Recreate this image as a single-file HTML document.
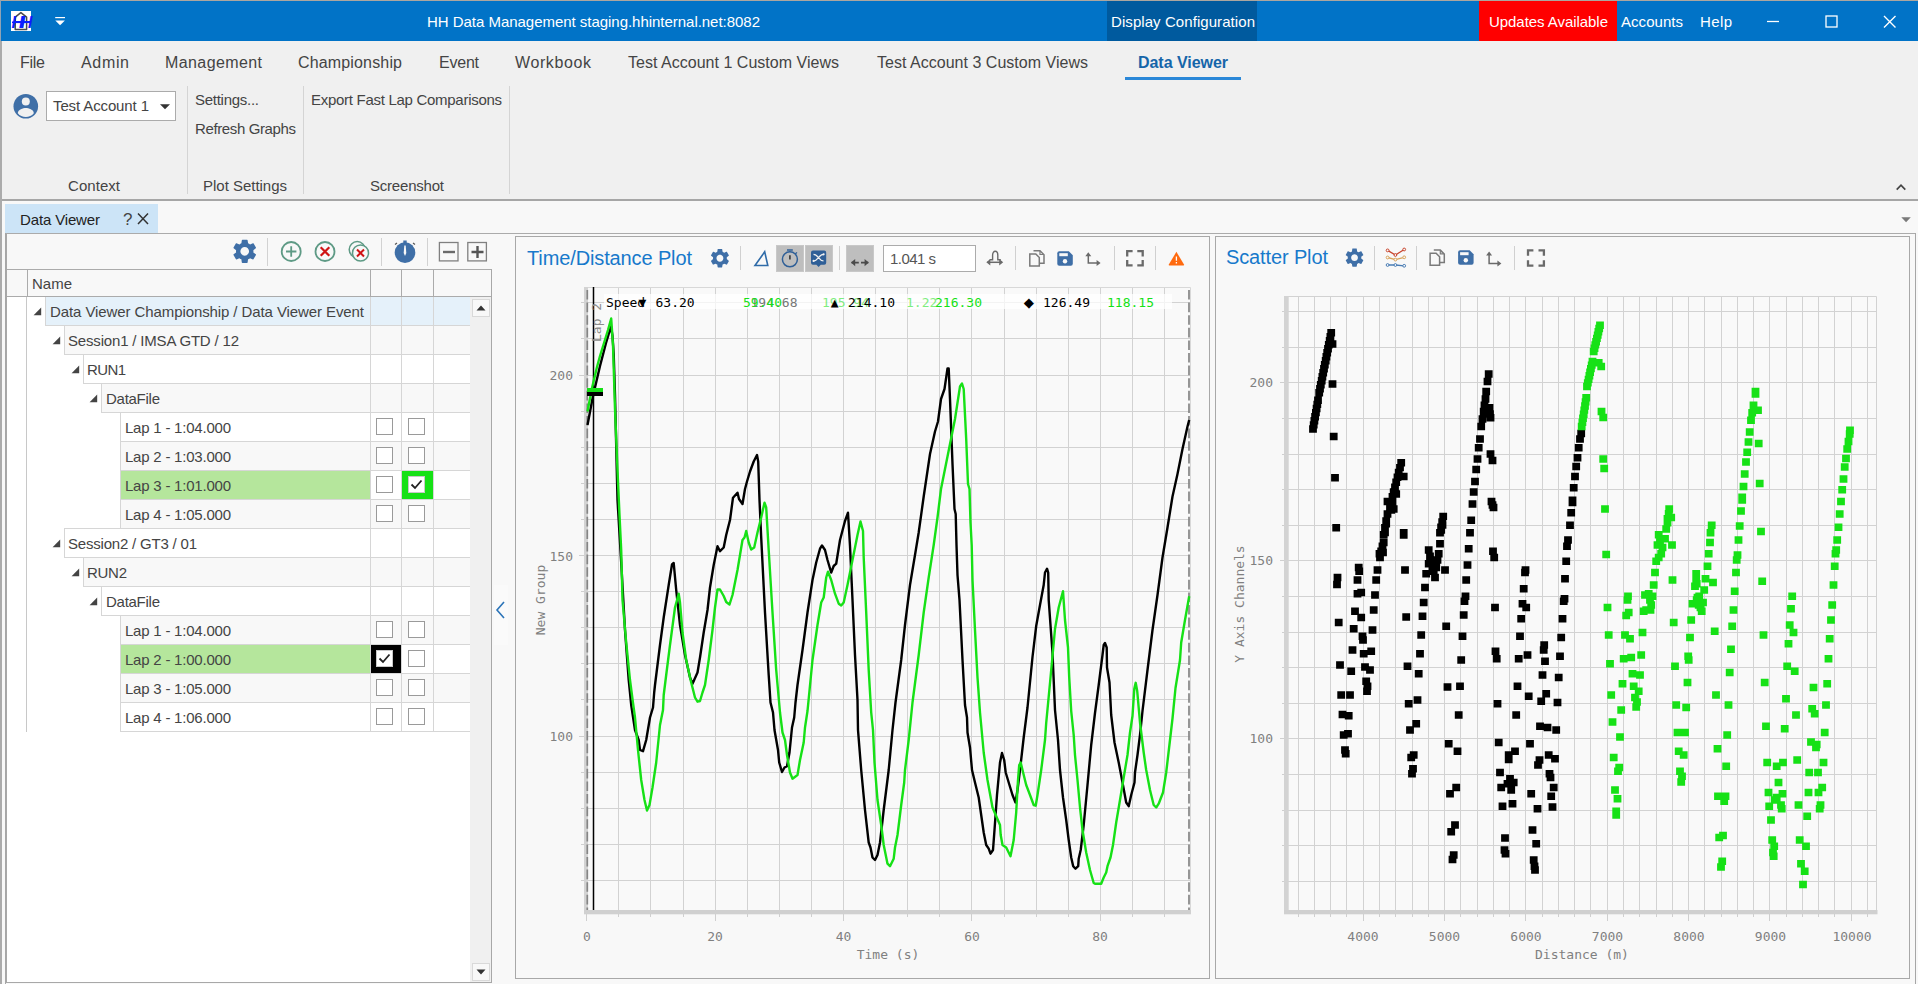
<!DOCTYPE html>
<html><head><meta charset="utf-8"><title>HH Data Management</title>
<style>
*{box-sizing:border-box}
html,body{margin:0;padding:0}
body{width:1918px;height:984px;overflow:hidden;background:#F0F0F0;position:relative;font-family:"Liberation Sans",sans-serif;}
.a{position:absolute}
.t{position:absolute;white-space:nowrap;line-height:20px;height:20px}
.mono{font-family:"DejaVu Sans Mono","Liberation Mono",monospace}
svg{position:absolute;left:0;top:0;overflow:visible}
.vsep{position:absolute;width:1px;background:#D4D4D4}
.cb{position:absolute;width:17px;height:17px;border:1px solid #9A9A9A;background:#fff}
.cell{position:absolute;border-left:1px solid #D6D6D6;border-bottom:1px solid #D6D6D6;height:29px}
</style></head><body>
<div class="a" style="left:0;top:0;width:1918px;height:41px;background:#0173C7"></div>
<div class="a" style="left:1107px;top:1px;width:150px;height:40px;background:#005A9E"></div>
<div class="a" style="left:1479px;top:1px;width:138px;height:40px;background:#FF0000"></div>
<div class="a" style="left:0;top:0;width:1918px;height:1px;background:#ACA69F"></div>
<div class="a" style="left:0;top:0;width:1px;height:41px;background:#8FA3B5"></div>
<div class="a" style="left:0;top:199px;width:1918px;height:2px;background:#A6A6A6"></div>
<div class="a" style="left:0;top:201px;width:1918px;height:783px;background:#F8F8F8"></div>
<div class="a" style="left:5px;top:204px;width:153px;height:30px;background:#CCE4F7"></div>
<div class="a" style="left:5px;top:233px;width:1911px;height:1px;background:#ABABAB"></div>
<div class="a" style="left:1125px;top:77px;width:116px;height:3px;background:#2B88D8"></div>
<div class="vsep" style="left:187px;top:86px;height:108px"></div>
<div class="vsep" style="left:303px;top:86px;height:108px"></div>
<div class="vsep" style="left:509px;top:86px;height:108px"></div>
<div class="a" style="left:46px;top:91px;width:130px;height:30px;background:#fff;border:1px solid #ABABAB"></div>
<div class="a" style="left:0;top:41px;width:2px;height:943px;background:#ABABAB"></div>
<div class="a" style="left:5px;top:233px;width:1px;height:751px;background:#A6A6A6"></div>
<div class="a" style="left:1915px;top:233px;width:1px;height:751px;background:#A6A6A6"></div>
<div class="a" style="left:6px;top:234px;width:1px;height:749px;background:#A8A8A8"></div>
<div class="a" style="left:6px;top:269px;width:486px;height:714px;background:#fff;border:1px solid #A8A8A8"></div>
<div class="a" style="left:7px;top:269px;width:484px;height:28px;background:#F8F8F8;border-top:1px solid #ABABAB;border-bottom:1px solid #ABABAB"></div>
<div class="a" style="left:27px;top:270px;width:1px;height:26px;background:#ABABAB"></div>
<div class="a" style="left:370px;top:270px;width:1px;height:26px;background:#ABABAB"></div>
<div class="a" style="left:401px;top:270px;width:1px;height:26px;background:#ABABAB"></div>
<div class="a" style="left:433px;top:270px;width:1px;height:26px;background:#ABABAB"></div>
<div class="a" style="left:26px;top:297px;width:1px;height:435px;background:#C8C8C8"></div>
<div class="cell" style="left:45px;top:297px;width:325px;background:#E5F1FA"></div>
<div class="cell" style="left:370px;top:297px;width:31px;background:#E5F1FA"></div>
<div class="cell" style="left:401px;top:297px;width:32px;background:#E5F1FA"></div>
<div class="cell" style="left:433px;top:297px;width:37px;background:#E5F1FA"></div>
<svg width="1" height="1"><path d="M41.2 315.2l-7.6 0l7.6 -7.6z" fill="#444"/></svg>
<div class="cell" style="left:64px;top:326px;width:306px;background:#F8F8F8"></div>
<div class="cell" style="left:370px;top:326px;width:31px;background:#F8F8F8"></div>
<div class="cell" style="left:401px;top:326px;width:32px;background:#F8F8F8"></div>
<div class="cell" style="left:433px;top:326px;width:37px;background:#F8F8F8"></div>
<svg width="1" height="1"><path d="M60.2 344.2l-7.6 0l7.6 -7.6z" fill="#444"/></svg>
<div class="cell" style="left:83px;top:355px;width:287px;background:#fff"></div>
<div class="cell" style="left:370px;top:355px;width:31px;background:#fff"></div>
<div class="cell" style="left:401px;top:355px;width:32px;background:#fff"></div>
<div class="cell" style="left:433px;top:355px;width:37px;background:#fff"></div>
<svg width="1" height="1"><path d="M79.2 373.2l-7.6 0l7.6 -7.6z" fill="#444"/></svg>
<div class="cell" style="left:101px;top:384px;width:269px;background:#F8F8F8"></div>
<div class="cell" style="left:370px;top:384px;width:31px;background:#F8F8F8"></div>
<div class="cell" style="left:401px;top:384px;width:32px;background:#F8F8F8"></div>
<div class="cell" style="left:433px;top:384px;width:37px;background:#F8F8F8"></div>
<svg width="1" height="1"><path d="M97.2 402.2l-7.6 0l7.6 -7.6z" fill="#444"/></svg>
<div class="cell" style="left:120px;top:413px;width:250px;background:#fff"></div>
<div class="cell" style="left:370px;top:413px;width:31px;background:#fff"></div>
<div class="cell" style="left:401px;top:413px;width:32px;background:#fff"></div>
<div class="cell" style="left:433px;top:413px;width:37px;background:#fff"></div>
<div class="cb" style="left:376px;top:418px"></div>
<div class="cb" style="left:408px;top:418px"></div>
<div class="cell" style="left:120px;top:442px;width:250px;background:#F8F8F8"></div>
<div class="cell" style="left:370px;top:442px;width:31px;background:#F8F8F8"></div>
<div class="cell" style="left:401px;top:442px;width:32px;background:#F8F8F8"></div>
<div class="cell" style="left:433px;top:442px;width:37px;background:#F8F8F8"></div>
<div class="cb" style="left:376px;top:447px"></div>
<div class="cb" style="left:408px;top:447px"></div>
<div class="cell" style="left:120px;top:471px;width:250px;background:#B5E69C"></div>
<div class="cell" style="left:370px;top:471px;width:31px;background:#fff"></div>
<div class="cell" style="left:401px;top:471px;width:32px;background:#fff"></div>
<div class="cell" style="left:433px;top:471px;width:37px;background:#fff"></div>
<div class="cb" style="left:376px;top:476px"></div>
<div class="a" style="left:402px;top:471px;width:31px;height:28px;background:#16E116"></div>
<div class="cb" style="left:408px;top:476px;border-color:#C8C8C8"></div>
<svg width="1" height="1"><path d="M411.5 484.5l3.5 3.5l6.5 -7.5" stroke="#222" stroke-width="1.8" fill="none"/></svg>
<div class="cell" style="left:120px;top:500px;width:250px;background:#F8F8F8"></div>
<div class="cell" style="left:370px;top:500px;width:31px;background:#F8F8F8"></div>
<div class="cell" style="left:401px;top:500px;width:32px;background:#F8F8F8"></div>
<div class="cell" style="left:433px;top:500px;width:37px;background:#F8F8F8"></div>
<div class="cb" style="left:376px;top:505px"></div>
<div class="cb" style="left:408px;top:505px"></div>
<div class="cell" style="left:64px;top:529px;width:306px;background:#fff"></div>
<div class="a" style="left:64px;top:528px;width:56px;height:1px;background:#D6D6D6"></div>
<div class="cell" style="left:370px;top:529px;width:31px;background:#fff"></div>
<div class="cell" style="left:401px;top:529px;width:32px;background:#fff"></div>
<div class="cell" style="left:433px;top:529px;width:37px;background:#fff"></div>
<svg width="1" height="1"><path d="M60.2 547.2l-7.6 0l7.6 -7.6z" fill="#444"/></svg>
<div class="cell" style="left:83px;top:558px;width:287px;background:#F8F8F8"></div>
<div class="cell" style="left:370px;top:558px;width:31px;background:#F8F8F8"></div>
<div class="cell" style="left:401px;top:558px;width:32px;background:#F8F8F8"></div>
<div class="cell" style="left:433px;top:558px;width:37px;background:#F8F8F8"></div>
<svg width="1" height="1"><path d="M79.2 576.2l-7.6 0l7.6 -7.6z" fill="#444"/></svg>
<div class="cell" style="left:101px;top:587px;width:269px;background:#fff"></div>
<div class="cell" style="left:370px;top:587px;width:31px;background:#fff"></div>
<div class="cell" style="left:401px;top:587px;width:32px;background:#fff"></div>
<div class="cell" style="left:433px;top:587px;width:37px;background:#fff"></div>
<svg width="1" height="1"><path d="M97.2 605.2l-7.6 0l7.6 -7.6z" fill="#444"/></svg>
<div class="cell" style="left:120px;top:616px;width:250px;background:#F8F8F8"></div>
<div class="cell" style="left:370px;top:616px;width:31px;background:#F8F8F8"></div>
<div class="cell" style="left:401px;top:616px;width:32px;background:#F8F8F8"></div>
<div class="cell" style="left:433px;top:616px;width:37px;background:#F8F8F8"></div>
<div class="cb" style="left:376px;top:621px"></div>
<div class="cb" style="left:408px;top:621px"></div>
<div class="cell" style="left:120px;top:645px;width:250px;background:#B5E69C"></div>
<div class="cell" style="left:370px;top:645px;width:31px;background:#fff"></div>
<div class="cell" style="left:401px;top:645px;width:32px;background:#fff"></div>
<div class="cell" style="left:433px;top:645px;width:37px;background:#fff"></div>
<div class="a" style="left:371px;top:645px;width:30px;height:28px;background:#000"></div>
<div class="cb" style="left:376px;top:650px;border-color:#C8C8C8"></div>
<svg width="1" height="1"><path d="M379.5 658.5l3.5 3.5l6.5 -7.5" stroke="#222" stroke-width="1.8" fill="none"/></svg>
<div class="cb" style="left:408px;top:650px"></div>
<div class="cell" style="left:120px;top:674px;width:250px;background:#F8F8F8"></div>
<div class="cell" style="left:370px;top:674px;width:31px;background:#F8F8F8"></div>
<div class="cell" style="left:401px;top:674px;width:32px;background:#F8F8F8"></div>
<div class="cell" style="left:433px;top:674px;width:37px;background:#F8F8F8"></div>
<div class="cb" style="left:376px;top:679px"></div>
<div class="cb" style="left:408px;top:679px"></div>
<div class="cell" style="left:120px;top:703px;width:250px;background:#fff"></div>
<div class="cell" style="left:370px;top:703px;width:31px;background:#fff"></div>
<div class="cell" style="left:401px;top:703px;width:32px;background:#fff"></div>
<div class="cell" style="left:433px;top:703px;width:37px;background:#fff"></div>
<div class="cb" style="left:376px;top:708px"></div>
<div class="cb" style="left:408px;top:708px"></div>
<div class="a" style="left:470px;top:297px;width:21px;height:685px;background:#F0F0F0"></div>
<div class="a" style="left:472px;top:299px;width:18px;height:18px;background:#F8F8F8;border:1px solid #D9D9D9"></div>
<div class="a" style="left:472px;top:963px;width:18px;height:18px;background:#F8F8F8;border:1px solid #D9D9D9"></div>
<svg width="1" height="1"><path d="M476.5 310.5h9l-4.5 -5z M476.5 969.5h9l-4.5 5z" fill="#333"/></svg>
<div class="a" style="left:494px;top:585px;width:14px;height:60px;background:#FAFAFA"></div>
<svg width="1" height="1"><path d="M504 602l-7 8l7 8" stroke="#2B74B8" stroke-width="1.6" fill="none"/></svg>
<div class="a" style="left:515px;top:236px;width:695px;height:743px;background:#F8F8F8;border:1px solid #A8A8A8"></div>
<div class="a" style="left:1215px;top:236px;width:695px;height:743px;background:#F8F8F8;border:1px solid #A8A8A8"></div>
<div class="a" style="left:776px;top:245px;width:28px;height:27px;background:#BEBEBE;border:1px solid #C8C8C8"></div>
<div class="a" style="left:805px;top:245px;width:28px;height:27px;background:#BEBEBE;border:1px solid #C8C8C8"></div>
<div class="a" style="left:846px;top:245px;width:28px;height:27px;background:#BEBEBE;border:1px solid #C8C8C8"></div>
<div class="a" style="left:883px;top:245px;width:93px;height:27px;background:#fff;border:1px solid #ABABAB"></div>
<div class="vsep" style="left:740px;top:246px;height:24px;background:#D0D0D0"></div>
<div class="vsep" style="left:839px;top:246px;height:24px;background:#D0D0D0"></div>
<div class="vsep" style="left:1015px;top:246px;height:24px;background:#D0D0D0"></div>
<div class="vsep" style="left:1114px;top:246px;height:24px;background:#D0D0D0"></div>
<div class="vsep" style="left:1155px;top:246px;height:24px;background:#D0D0D0"></div>
<div class="vsep" style="left:1374px;top:246px;height:24px;background:#D0D0D0"></div>
<div class="vsep" style="left:1416px;top:246px;height:24px;background:#D0D0D0"></div>
<div class="vsep" style="left:1514px;top:246px;height:24px;background:#D0D0D0"></div>
<svg width="1918" height="984" viewBox="0 0 1918 984">
<rect x="588" y="287" width="602" height="623" fill="#F9F9F9"/>
<path d="M618.5 287V910M650.5 287V910M683.5 287V910M715.5 287V910M747.5 287V910M779.5 287V910M811.5 287V910M843.5 287V910M875.5 287V910M907.5 287V910M939.5 287V910M971.5 287V910M1004.5 287V910M1036.5 287V910M1068.5 287V910M1100.5 287V910M1132.5 287V910M1164.5 287V910M588 880.5H1190M588 844.5H1190M588 808.5H1190M588 772.5H1190M588 736.5H1190M588 699.5H1190M588 663.5H1190M588 627.5H1190M588 591.5H1190M588 555.5H1190M588 519.5H1190M588 483.5H1190M588 447.5H1190M588 411.5H1190M588 375.5H1190M588 338.5H1190M588 302.5H1190" stroke="#D2D2D2" stroke-width="1" fill="none"/>
<path d="M588 287.5H1190.5V910" stroke="#D8D8D8" stroke-width="1" fill="none"/>
<path d="M586.5 914V921M618.5 914V917M650.5 914V917M683.5 914V917M715.5 914V921M747.5 914V917M779.5 914V917M811.5 914V917M843.5 914V921M875.5 914V917M907.5 914V917M939.5 914V917M971.5 914V921M1004.5 914V917M1036.5 914V917M1068.5 914V917M1100.5 914V921M1132.5 914V917M1164.5 914V917M581 880.5H585M581 844.5H585M581 808.5H585M581 772.5H585M579 736.5H585M581 699.5H585M581 663.5H585M581 627.5H585M581 591.5H585M579 555.5H585M581 519.5H585M581 483.5H585M581 447.5H585M581 411.5H585M579 375.5H585M581 338.5H585M581 302.5H585" stroke="#CFCFCF" stroke-width="1" fill="none"/>
<rect x="584" y="287" width="4" height="627" fill="#D3D3D3"/>
<rect x="584" y="910" width="607" height="4.3" fill="#D0D0D0"/>
<path d="M587.3 290V910M1189 290V910" stroke="#858585" stroke-width="1.7" stroke-dasharray="9.6 3" fill="none"/>
<path d="M593.5 287V910" stroke="#000" stroke-width="1.5"/>
<text transform="translate(601,342) rotate(-90)" class="mono" fill="#8C8C8C" font-size="13">Lap 2</text>
<rect x="604" y="294" width="568" height="15" fill="#fff" opacity="0.72"/>
<path d="M587.5 425 L593 396 L600 366 L606 343 L611 326.5 L612.5 336 L613.7 354 L615 395 L617.5 500 L621.2 562.5 L625 630 L628.7 680 L631.2 705 L635 730 L638.7 740 L640 750 L643 751.2 L646.2 740 L650 717.5 L653 707.5 L654.2 692.5 L655 685 L660 645 L663.7 617.5 L668.7 585 L672 564.5 L673.7 563 L676.2 590 L680 625 L685 655 L690 677.5 L692.5 683.7 L697.5 672.5 L700 657.5 L703.7 632.5 L707.5 610 L710 587.5 L713.7 565 L717.5 546.2 L720 551.2 L723.7 547.5 L726.2 535 L730 520 L733 497.7 L737.5 492.7 L739 499 L742.5 504 L745 489 L747 481.5 L750 471.5 L753.7 461.5 L757 455 L758.2 461.5 L759.5 500 L761.2 537.5 L765 612.5 L768.7 675 L770.5 702.5 L773 712.5 L774.5 730 L778 750 L779.2 762.5 L782 772 L784.5 767.5 L787 766.2 L789.5 752.5 L792 727.5 L794.2 717.5 L795.5 702.5 L797.5 685 L802.5 650 L807.5 612.5 L812.5 580 L816.2 562.5 L820 548.7 L822 545.5 L825 550 L827.5 560 L831.2 572.5 L833.7 566 L836.2 563.7 L840 540 L845 521 L848 512.7 L850 546 L852.5 600 L855 655 L857.5 700 L858 730 L861.2 770 L865 810 L868.7 842.5 L870.5 847.5 L872.5 857.5 L875 860 L877.5 855 L880 842.5 L883.7 810 L888.7 770 L892.5 730 L895.5 702.5 L901.2 660 L905 625 L910 585 L915 555 L918.7 532.5 L923.7 496.5 L930 454 L935 431.5 L938 421.5 L941 399 L944.5 389 L947.5 368.5 L948.7 368.5 L950 399 L952.5 464 L954.5 509 L955.7 514 L956.5 545 L957.5 575 L959.5 600 L962.5 660 L965 705 L967 717.5 L967.5 732.5 L970 747.5 L972 770 L975 782.5 L978.7 797.5 L981.2 815 L983.7 832.5 L986.2 845 L988.7 848.7 L990.5 853.7 L993 850 L994.5 830 L997 795 L1000 762.5 L1002 753 L1004.2 760 L1005.7 772.5 L1008.7 782.5 L1012.5 795 L1015.5 802.5 L1017.5 790 L1020 770 L1023.7 737.5 L1027.5 707.5 L1032.5 657 L1036.2 626 L1040 605 L1043.7 585 L1045 572.5 L1047 568.7 L1048.2 572.5 L1048.7 600 L1052.5 653 L1055 710 L1058 740 L1060 770 L1063 797.5 L1066.2 820 L1068.7 840 L1071.2 857.5 L1073.2 866.2 L1075.5 868.7 L1078.2 866.2 L1078.7 858.7 L1080.7 850 L1083.7 825 L1087.5 785 L1091.2 745 L1095 713 L1098.7 685 L1102.5 655 L1103.7 645 L1105 643 L1106.7 647.5 L1107 667.5 L1109.5 682.5 L1111.2 715 L1114.5 742.5 L1118.7 762.5 L1122.5 782.5 L1126.2 802.5 L1128.7 806.2 L1131.2 795 L1134.5 782.5 L1135 772.5 L1137.5 755 L1140 735 L1142.5 711 L1147.5 670 L1152.5 630 L1157.5 595 L1162.5 557.5 L1167.5 527.5 L1172.5 496.5 L1177.5 474 L1182.5 449 L1187.5 426.5 L1189.2 420" stroke="#000" stroke-width="2.4" fill="none" stroke-linejoin="round" stroke-linecap="butt"/>
<path d="M587.5 411.5 L592 388 L597 367 L600 356 L604 343 L608 330 L611.2 318.5 L613 345 L615 409 L618 481.5 L619.5 515 L621.2 550 L622.5 600 L626.2 642.5 L630 680 L633 703 L635 717.5 L638 750 L641.2 780 L644.5 800 L647 810.5 L649.5 805 L652.5 787.5 L656.2 762.5 L660 725 L663 710 L663.7 695 L666.2 675 L670 645 L675 607.5 L678.7 593.7 L680 602.5 L682.5 632.5 L686.2 660 L691.2 682.5 L695 697.5 L697.5 701.7 L700 701 L702.5 692.5 L705 685 L708.7 660 L712.5 630 L715 607.5 L717.5 589.5 L720 589.5 L723.7 596 L726.2 602 L729.5 604.5 L732.5 595 L737.5 570 L742.5 540 L744.5 537.5 L746.2 531 L748.7 542.5 L751.2 549.5 L754.2 547.5 L757.5 532.5 L761.2 517.5 L764.5 502.7 L766.2 507.5 L768.7 550 L772.5 612.5 L776.2 670 L780 712.5 L782.5 732.5 L785 740 L787 755 L790 772.5 L792.5 778.7 L797.5 775 L800 760 L803.7 742.5 L805 727.5 L807.5 711 L812.5 660 L817.5 625 L821.2 602.5 L823.7 597.5 L826.2 577.5 L828 571.7 L831.2 580 L835 593.7 L838.7 603.7 L841.2 605.5 L843.7 602.5 L847.5 585 L852.5 560 L857.5 535 L860.5 521.5 L863 531 L863.7 557.5 L866.2 612.5 L868.7 670 L871.2 712.5 L873 730 L874.5 762.5 L877.5 800 L881.2 825 L883.7 845 L887.5 863.7 L890 866.2 L893.7 858.7 L895 847.5 L897.5 835 L901.2 805 L904.2 782.5 L905 770 L908.7 740 L912.5 702.5 L918.7 655 L923.7 612.5 L928.7 577.5 L933.7 545 L937.5 517.5 L941 489 L947.5 456.5 L955 419 L960 386.5 L962 383.5 L963.7 389 L966.2 439 L968 484 L969.5 489 L970.5 522.5 L971.7 545 L972.5 580 L975 630 L977.5 677.5 L980 712.5 L983.7 752.5 L987.5 780 L992.5 807.5 L1000 825 L1000.7 835 L1002.5 845 L1006.2 847.5 L1010.5 856.2 L1013.7 840 L1016.2 812.5 L1018 780 L1019.2 765 L1020.7 762.5 L1022.5 770 L1026.2 785 L1030 795 L1033.7 805 L1035.7 805.7 L1037.5 795 L1041.2 770 L1045 740 L1046.2 723 L1050 683 L1055 629 L1058.7 607.5 L1063 591.2 L1065 620 L1068 647.5 L1069.2 677 L1071.2 711 L1073.7 735 L1075 755 L1077.5 780 L1080 807.5 L1082.5 830 L1086.2 852.5 L1090 870 L1093.7 883 L1095 883.7 L1101.2 883.7 L1103.7 877.5 L1106.2 872.5 L1107.5 866.2 L1110.5 857.5 L1113 845 L1116.2 822.5 L1120 800 L1123.7 777.5 L1127.5 755 L1130 732.5 L1132.5 716 L1134.3 688.7 L1135.7 682.8 L1137.2 691 L1140 722.5 L1143.7 752.5 L1146.2 770 L1150 790 L1153.7 805 L1156.2 807.5 L1158.7 803.7 L1163 792.5 L1166.2 772.5 L1170 740 L1172.5 718.5 L1175.5 688 L1180 660 L1181.2 642.5 L1185 620 L1189.2 596.2" stroke="#16E116" stroke-width="2.4" fill="none" stroke-linejoin="round"/>
<rect x="587" y="388" width="16" height="4" fill="#16E116"/>
<rect x="587" y="392" width="16" height="4" fill="#000"/>
<text x="606" y="307" class="mono" font-size="13" fill="#000">Speed</text>
<text x="638.5" y="307" class="mono" font-size="13" fill="#000">&#9660;</text>
<text x="655.5" y="307" class="mono" font-size="13" fill="#000">63.20</text>
<text x="750.5" y="307" class="mono" font-size="13" fill="#777">194.68</text>
<text x="743" y="307" class="mono" font-size="13" fill="#16E116">59.40</text>
<text x="822" y="307" class="mono" font-size="13" fill="#16E116" opacity="0.55">195.94</text>
<text x="830.7" y="307" class="mono" font-size="13" fill="#000">&#9650;</text>
<text x="848" y="307" class="mono" font-size="13" fill="#000">214.10</text>
<text x="906" y="307" class="mono" font-size="13" fill="#16E116" opacity="0.55">1.22</text>
<text x="935" y="307" class="mono" font-size="13" fill="#16E116">216.30</text>
<text x="1028.8" y="308" text-anchor="middle" class="mono" font-size="17" fill="#000">&#9670;</text>
<text x="1043" y="307" class="mono" font-size="13" fill="#000">126.49</text>
<text x="1107" y="307" class="mono" font-size="13" fill="#16E116">118.15</text>
<text x="573" y="379.5" text-anchor="end" class="mono" font-size="13" fill="#808080">200</text>
<text x="573" y="560.5" text-anchor="end" class="mono" font-size="13" fill="#808080">150</text>
<text x="573" y="740.5" text-anchor="end" class="mono" font-size="13" fill="#808080">100</text>
<text x="587" y="941" text-anchor="middle" class="mono" font-size="13" fill="#808080">0</text>
<text x="715" y="941" text-anchor="middle" class="mono" font-size="13" fill="#808080">20</text>
<text x="843.5" y="941" text-anchor="middle" class="mono" font-size="13" fill="#808080">40</text>
<text x="972" y="941" text-anchor="middle" class="mono" font-size="13" fill="#808080">60</text>
<text x="1100" y="941" text-anchor="middle" class="mono" font-size="13" fill="#808080">80</text>
<text x="888" y="959" text-anchor="middle" class="mono" font-size="13" fill="#808080">Time (s)</text>
<text transform="translate(545,600) rotate(-90)" text-anchor="middle" class="mono" font-size="13" fill="#808080">New Group</text>
<rect x="1288" y="296" width="589" height="614" fill="#F9F9F9"/>
<path d="M1298.5 296V910M1314.5 296V910M1330.5 296V910M1346.5 296V910M1363.5 296V910M1379.5 296V910M1395.5 296V910M1412.5 296V910M1428.5 296V910M1444.5 296V910M1460.5 296V910M1477.5 296V910M1493.5 296V910M1509.5 296V910M1525.5 296V910M1542.5 296V910M1558.5 296V910M1574.5 296V910M1590.5 296V910M1607.5 296V910M1623.5 296V910M1639.5 296V910M1656.5 296V910M1672.5 296V910M1688.5 296V910M1704.5 296V910M1721.5 296V910M1737.5 296V910M1753.5 296V910M1769.5 296V910M1786.5 296V910M1802.5 296V910M1818.5 296V910M1834.5 296V910M1851.5 296V910M1867.5 296V910M1288 881.5H1877M1288 845.5H1877M1288 810.5H1877M1288 774.5H1877M1288 738.5H1877M1288 703.5H1877M1288 667.5H1877M1288 632.5H1877M1288 596.5H1877M1288 560.5H1877M1288 525.5H1877M1288 489.5H1877M1288 454.5H1877M1288 418.5H1877M1288 382.5H1877M1288 347.5H1877M1288 311.5H1877" stroke="#D2D2D2" stroke-width="1" fill="none"/>
<path d="M1288 296.5H1876.5V910" stroke="#D2D2D2" stroke-width="1" fill="none"/>
<path d="M1298.5 914V917M1314.5 914V917M1330.5 914V917M1346.5 914V917M1363.5 914V921M1379.5 914V917M1395.5 914V917M1412.5 914V917M1428.5 914V917M1444.5 914V921M1460.5 914V917M1477.5 914V917M1493.5 914V917M1509.5 914V917M1525.5 914V921M1542.5 914V917M1558.5 914V917M1574.5 914V917M1590.5 914V917M1607.5 914V921M1623.5 914V917M1639.5 914V917M1656.5 914V917M1672.5 914V917M1688.5 914V921M1704.5 914V917M1721.5 914V917M1737.5 914V917M1753.5 914V917M1769.5 914V921M1786.5 914V917M1802.5 914V917M1818.5 914V917M1834.5 914V917M1851.5 914V921M1867.5 914V917M1282 881.5H1285M1282 845.5H1285M1282 810.5H1285M1282 774.5H1285M1280 738.5H1285M1282 703.5H1285M1282 667.5H1285M1282 632.5H1285M1282 596.5H1285M1280 560.5H1285M1282 525.5H1285M1282 489.5H1285M1282 454.5H1285M1282 418.5H1285M1280 382.5H1285M1282 347.5H1285M1282 311.5H1285" stroke="#CFCFCF" stroke-width="1" fill="none"/>
<rect x="1284" y="296" width="4.7" height="618" fill="#D3D3D3"/>
<rect x="1284" y="910" width="593.5" height="4.3" fill="#D0D0D0"/>
<path d="M1309.1 425.3h7.8v7.4h-7.8zM1309.8 421.2h7.8v7.4h-7.8zM1310.5 417.1h7.8v7.4h-7.8zM1311.2 413h7.8v7.4h-7.8zM1312 408.9h7.8v7.4h-7.8zM1312.7 404.8h7.8v7.4h-7.8zM1313.4 400.7h7.8v7.4h-7.8zM1314.1 396.6h7.8v7.4h-7.8zM1315.3 389.1h7.8v7.4h-7.8zM1316.1 385.1h7.8v7.4h-7.8zM1316.9 381.1h7.8v7.4h-7.8zM1317.8 377.1h7.8v7.4h-7.8zM1318.5 373.1h7.8v7.4h-7.8zM1319.3 369.1h7.8v7.4h-7.8zM1320.1 365.1h7.8v7.4h-7.8zM1320.9 361.1h7.8v7.4h-7.8zM1321.8 357.1h7.8v7.4h-7.8zM1322.5 353.1h7.8v7.4h-7.8zM1323.3 349.1h7.8v7.4h-7.8zM1324.1 345.1h7.8v7.4h-7.8zM1324.9 341.1h7.8v7.4h-7.8zM1325.8 337.1h7.8v7.4h-7.8zM1326.5 333.1h7.8v7.4h-7.8zM1327.3 329.1h7.8v7.4h-7.8zM1328.6 340.3h7.8v7.4h-7.8zM1328.6 380.3h7.8v7.4h-7.8zM1329.8 432.8h7.8v7.4h-7.8zM1331.1 474.1h7.8v7.4h-7.8zM1332.3 524h7.8v7.4h-7.8zM1379.8 531h7.8v7.4h-7.8zM1381.1 524.1h7.8v7.4h-7.8zM1382.3 517.2h7.8v7.4h-7.8zM1383.6 510.3h7.8v7.4h-7.8zM1386.1 502.8h7.8v7.4h-7.8zM1387.3 497.9h7.8v7.4h-7.8zM1388.6 493.1h7.8v7.4h-7.8zM1389.8 488.2h7.8v7.4h-7.8zM1391.1 483.4h7.8v7.4h-7.8zM1392.3 478.5h7.8v7.4h-7.8zM1393.6 473.6h7.8v7.4h-7.8zM1394.8 468.8h7.8v7.4h-7.8zM1396.1 463.9h7.8v7.4h-7.8zM1397.3 459.1h7.8v7.4h-7.8zM1383.6 497.8h7.8v7.4h-7.8zM1388.6 495.3h7.8v7.4h-7.8zM1389.8 505.3h7.8v7.4h-7.8zM1399.8 472.8h7.8v7.4h-7.8zM1399.8 529h7.8v7.4h-7.8zM1392.3 490.3h7.8v7.4h-7.8zM1436.1 529h7.8v7.4h-7.8zM1437.2 523.6h7.8v7.4h-7.8zM1438.3 518.2h7.8v7.4h-7.8zM1439.3 512.8h7.8v7.4h-7.8zM1466.1 529h7.8v7.4h-7.8zM1467.3 516.5h7.8v7.4h-7.8zM1468.6 500.3h7.8v7.4h-7.8zM1469.8 488.3h7.8v7.4h-7.8zM1471.1 477.8h7.8v7.4h-7.8zM1472.3 465.8h7.8v7.4h-7.8zM1473.6 455.3h7.8v7.4h-7.8zM1474.8 444.1h7.8v7.4h-7.8zM1476.1 435.3h7.8v7.4h-7.8zM1477.3 422.8h7.8v7.4h-7.8zM1478.6 415.3h7.8v7.4h-7.8zM1479.8 407.8h7.8v7.4h-7.8zM1480.6 401.6h7.8v7.4h-7.8zM1481.6 395.3h7.8v7.4h-7.8zM1482.3 387.8h7.8v7.4h-7.8zM1483.6 377.8h7.8v7.4h-7.8zM1484.8 370.3h7.8v7.4h-7.8zM1486.1 410.3h7.8v7.4h-7.8zM1485.6 404.1h7.8v7.4h-7.8zM1486.6 450.3h7.8v7.4h-7.8zM1488.6 456.8h7.8v7.4h-7.8zM1487.6 497.8h7.8v7.4h-7.8zM1489.6 503.8h7.8v7.4h-7.8zM1486.6 414.1h7.8v7.4h-7.8zM1566.1 521.5h7.8v7.4h-7.8zM1567.3 509.1h7.8v7.4h-7.8zM1568.6 496.6h7.8v7.4h-7.8zM1569.8 484.1h7.8v7.4h-7.8zM1571.1 472.8h7.8v7.4h-7.8zM1572.3 462.8h7.8v7.4h-7.8zM1573.6 454.1h7.8v7.4h-7.8zM1574.8 444.1h7.8v7.4h-7.8zM1576.1 435.3h7.8v7.4h-7.8zM1577.3 429.8h7.8v7.4h-7.8zM1333.6 573.8h7.8v7.4h-7.8zM1333.1 580.8h7.8v7.4h-7.8zM1334.8 618.8h7.8v7.4h-7.8zM1336.1 661.3h7.8v7.4h-7.8zM1337.3 691.3h7.8v7.4h-7.8zM1346.1 691.3h7.8v7.4h-7.8zM1338.6 710.8h7.8v7.4h-7.8zM1344.8 712h7.8v7.4h-7.8zM1339.8 731.3h7.8v7.4h-7.8zM1344.1 730h7.8v7.4h-7.8zM1347.3 667.5h7.8v7.4h-7.8zM1348.6 646.3h7.8v7.4h-7.8zM1349.8 625h7.8v7.4h-7.8zM1351.1 607.5h7.8v7.4h-7.8zM1357.3 613.8h7.8v7.4h-7.8zM1358.6 632.5h7.8v7.4h-7.8zM1359.1 636.3h7.8v7.4h-7.8zM1353.6 590h7.8v7.4h-7.8zM1357.3 588.8h7.8v7.4h-7.8zM1353.6 576.3h7.8v7.4h-7.8zM1354.8 563.8h7.8v7.4h-7.8zM1355.3 567.5h7.8v7.4h-7.8zM1359.8 650h7.8v7.4h-7.8zM1367.3 647.5h7.8v7.4h-7.8zM1361.1 663.3h7.8v7.4h-7.8zM1366.1 666.3h7.8v7.4h-7.8zM1362.3 677.5h7.8v7.4h-7.8zM1363.6 682.5h7.8v7.4h-7.8zM1363.1 687.5h7.8v7.4h-7.8zM1368.6 626.3h7.8v7.4h-7.8zM1369.8 606.3h7.8v7.4h-7.8zM1371.1 591.3h7.8v7.4h-7.8zM1372.3 576.3h7.8v7.4h-7.8zM1373.6 566.3h7.8v7.4h-7.8zM1376.1 553.8h7.8v7.4h-7.8zM1377.3 547.5h7.8v7.4h-7.8zM1378.6 542.5h7.8v7.4h-7.8zM1379.8 538.8h7.8v7.4h-7.8zM1381.1 528.8h7.8v7.4h-7.8zM1382.3 520h7.8v7.4h-7.8zM1387.3 506.3h7.8v7.4h-7.8zM1388.6 500.1h7.8v7.4h-7.8zM1375.6 550h7.8v7.4h-7.8zM1379.1 548.8h7.8v7.4h-7.8zM1399.8 531.3h7.8v7.4h-7.8zM1401.1 566.3h7.8v7.4h-7.8zM1402.3 613.3h7.8v7.4h-7.8zM1403.6 662.5h7.8v7.4h-7.8zM1404.8 700h7.8v7.4h-7.8zM1413.6 696.3h7.8v7.4h-7.8zM1406.1 726.3h7.8v7.4h-7.8zM1412.3 720h7.8v7.4h-7.8zM1414.8 670h7.8v7.4h-7.8zM1416.1 650h7.8v7.4h-7.8zM1417.3 631.3h7.8v7.4h-7.8zM1418.6 612.5h7.8v7.4h-7.8zM1419.8 598.8h7.8v7.4h-7.8zM1421.1 583.8h7.8v7.4h-7.8zM1422.3 570h7.8v7.4h-7.8zM1424.8 546.3h7.8v7.4h-7.8zM1426.1 552.5h7.8v7.4h-7.8zM1427.3 557.5h7.8v7.4h-7.8zM1428.6 562.5h7.8v7.4h-7.8zM1429.8 567.5h7.8v7.4h-7.8zM1431.1 573.8h7.8v7.4h-7.8zM1432.3 563.8h7.8v7.4h-7.8zM1434.8 550h7.8v7.4h-7.8zM1436.1 540h7.8v7.4h-7.8zM1437.3 526.3h7.8v7.4h-7.8zM1438.6 521.3h7.8v7.4h-7.8zM1441.1 566.3h7.8v7.4h-7.8zM1433.6 556.3h7.8v7.4h-7.8zM1424.8 560h7.8v7.4h-7.8zM1442.3 622.5h7.8v7.4h-7.8zM1443.6 683.3h7.8v7.4h-7.8zM1444.8 740h7.8v7.4h-7.8zM1454.8 711.3h7.8v7.4h-7.8zM1456.1 682.5h7.8v7.4h-7.8zM1457.3 656.3h7.8v7.4h-7.8zM1458.6 632.5h7.8v7.4h-7.8zM1459.8 611.3h7.8v7.4h-7.8zM1460.6 597.5h7.8v7.4h-7.8zM1461.6 592.5h7.8v7.4h-7.8zM1462.3 576.3h7.8v7.4h-7.8zM1463.6 561.3h7.8v7.4h-7.8zM1464.8 545h7.8v7.4h-7.8zM1488.6 501.3h7.8v7.4h-7.8zM1489.1 547.5h7.8v7.4h-7.8zM1490.3 553.8h7.8v7.4h-7.8zM1491.1 603.8h7.8v7.4h-7.8zM1491.6 647.5h7.8v7.4h-7.8zM1492.8 655h7.8v7.4h-7.8zM1493.6 700h7.8v7.4h-7.8zM1494.8 738.8h7.8v7.4h-7.8zM1512.3 711.3h7.8v7.4h-7.8zM1513.6 682.5h7.8v7.4h-7.8zM1514.8 655h7.8v7.4h-7.8zM1523.6 651.3h7.8v7.4h-7.8zM1516.1 632.5h7.8v7.4h-7.8zM1517.3 615h7.8v7.4h-7.8zM1518.6 600h7.8v7.4h-7.8zM1522.3 603.8h7.8v7.4h-7.8zM1519.8 585h7.8v7.4h-7.8zM1521.1 568.8h7.8v7.4h-7.8zM1521.6 566.3h7.8v7.4h-7.8zM1524.8 692.5h7.8v7.4h-7.8zM1526.1 740h7.8v7.4h-7.8zM1537.3 697.5h7.8v7.4h-7.8zM1542.3 690h7.8v7.4h-7.8zM1538.6 671.3h7.8v7.4h-7.8zM1541.1 657.5h7.8v7.4h-7.8zM1539.8 646.3h7.8v7.4h-7.8zM1540.3 641.3h7.8v7.4h-7.8zM1536.1 722.5h7.8v7.4h-7.8zM1543.6 723.8h7.8v7.4h-7.8zM1552.3 726.3h7.8v7.4h-7.8zM1553.6 698.8h7.8v7.4h-7.8zM1554.8 673.8h7.8v7.4h-7.8zM1556.1 652.5h7.8v7.4h-7.8zM1557.3 633.8h7.8v7.4h-7.8zM1558.6 615h7.8v7.4h-7.8zM1559.8 597.5h7.8v7.4h-7.8zM1560.6 595h7.8v7.4h-7.8zM1561.1 575h7.8v7.4h-7.8zM1562.3 557.5h7.8v7.4h-7.8zM1563.1 542.5h7.8v7.4h-7.8zM1564.1 536.3h7.8v7.4h-7.8zM1568.6 498.8h7.8v7.4h-7.8zM1341.1 746.3h7.8v7.4h-7.8zM1341.8 750h7.8v7.4h-7.8zM1409.8 751.3h7.8v7.4h-7.8zM1407.3 753.8h7.8v7.4h-7.8zM1409.1 765h7.8v7.4h-7.8zM1408.1 770h7.8v7.4h-7.8zM1453.6 747.5h7.8v7.4h-7.8zM1452.3 783.8h7.8v7.4h-7.8zM1446.1 790h7.8v7.4h-7.8zM1451.1 821.3h7.8v7.4h-7.8zM1447.3 828h7.8v7.4h-7.8zM1449.8 851.3h7.8v7.4h-7.8zM1448.6 855.8h7.8v7.4h-7.8zM1511.1 747.5h7.8v7.4h-7.8zM1504.8 751.3h7.8v7.4h-7.8zM1504.8 755.8h7.8v7.4h-7.8zM1496.1 768.8h7.8v7.4h-7.8zM1506.1 775h7.8v7.4h-7.8zM1509.8 778.8h7.8v7.4h-7.8zM1503.6 780h7.8v7.4h-7.8zM1497.3 783.8h7.8v7.4h-7.8zM1507.3 786.3h7.8v7.4h-7.8zM1508.6 800h7.8v7.4h-7.8zM1498.6 802.5h7.8v7.4h-7.8zM1501.1 834.3h7.8v7.4h-7.8zM1500.6 846.3h7.8v7.4h-7.8zM1501.6 850h7.8v7.4h-7.8zM1544.8 751.3h7.8v7.4h-7.8zM1551.1 755h7.8v7.4h-7.8zM1535.6 756.3h7.8v7.4h-7.8zM1534.1 761.3h7.8v7.4h-7.8zM1545.6 770h7.8v7.4h-7.8zM1546.6 773.8h7.8v7.4h-7.8zM1549.8 783.8h7.8v7.4h-7.8zM1527.3 790h7.8v7.4h-7.8zM1547.3 792.5h7.8v7.4h-7.8zM1548.6 803.3h7.8v7.4h-7.8zM1533.6 805h7.8v7.4h-7.8zM1528.6 826.3h7.8v7.4h-7.8zM1532.3 840h7.8v7.4h-7.8zM1529.8 856.3h7.8v7.4h-7.8zM1530.6 862.5h7.8v7.4h-7.8zM1531.1 866.3h7.8v7.4h-7.8z" fill="#000"/>
<path d="M1577.8 422.8h7.8v7.4h-7.8zM1578.5 418.7h7.8v7.4h-7.8zM1579.1 414.6h7.8v7.4h-7.8zM1579.8 410.5h7.8v7.4h-7.8zM1580.4 406.4h7.8v7.4h-7.8zM1581.1 402.3h7.8v7.4h-7.8zM1581.7 398.2h7.8v7.4h-7.8zM1582.3 394.1h7.8v7.4h-7.8zM1583.1 382.8h7.8v7.4h-7.8zM1583.9 379.2h7.8v7.4h-7.8zM1584.7 375.7h7.8v7.4h-7.8zM1585.5 372.1h7.8v7.4h-7.8zM1586.2 368.5h7.8v7.4h-7.8zM1587 364.9h7.8v7.4h-7.8zM1587.8 361.4h7.8v7.4h-7.8zM1588.6 357.8h7.8v7.4h-7.8zM1589.8 347.8h7.8v7.4h-7.8zM1590.6 344.5h7.8v7.4h-7.8zM1591.4 341.2h7.8v7.4h-7.8zM1592.2 338h7.8v7.4h-7.8zM1593 334.7h7.8v7.4h-7.8zM1593.8 331.4h7.8v7.4h-7.8zM1594.5 328.1h7.8v7.4h-7.8zM1595.3 324.8h7.8v7.4h-7.8zM1596.1 321.6h7.8v7.4h-7.8zM1597.3 362.8h7.8v7.4h-7.8zM1594.8 359.1h7.8v7.4h-7.8zM1597.6 407.8h7.8v7.4h-7.8zM1599.3 413.8h7.8v7.4h-7.8zM1599.3 455.3h7.8v7.4h-7.8zM1600.3 464.8h7.8v7.4h-7.8zM1601.1 505.3h7.8v7.4h-7.8zM1654.8 531h7.8v7.4h-7.8zM1662.3 525.3h7.8v7.4h-7.8zM1663.6 519h7.8v7.4h-7.8zM1664.8 512.8h7.8v7.4h-7.8zM1665.3 505.3h7.8v7.4h-7.8zM1602.3 550.8h7.8v7.4h-7.8zM1603.6 603.8h7.8v7.4h-7.8zM1604.8 631.3h7.8v7.4h-7.8zM1606.1 660h7.8v7.4h-7.8zM1607.3 691.3h7.8v7.4h-7.8zM1608.6 718.3h7.8v7.4h-7.8zM1616.1 733.3h7.8v7.4h-7.8zM1617.3 706.3h7.8v7.4h-7.8zM1618.6 680h7.8v7.4h-7.8zM1619.8 655h7.8v7.4h-7.8zM1627.3 653.8h7.8v7.4h-7.8zM1637.3 651.3h7.8v7.4h-7.8zM1621.1 631.3h7.8v7.4h-7.8zM1626.1 635h7.8v7.4h-7.8zM1622.3 611.8h7.8v7.4h-7.8zM1624.8 608.8h7.8v7.4h-7.8zM1623.6 596.3h7.8v7.4h-7.8zM1624.1 592.5h7.8v7.4h-7.8zM1628.6 670h7.8v7.4h-7.8zM1636.1 671.3h7.8v7.4h-7.8zM1629.8 682.5h7.8v7.4h-7.8zM1634.8 687.5h7.8v7.4h-7.8zM1631.1 693.8h7.8v7.4h-7.8zM1633.1 698.3h7.8v7.4h-7.8zM1632.3 703.3h7.8v7.4h-7.8zM1638.6 628.8h7.8v7.4h-7.8zM1639.8 607.5h7.8v7.4h-7.8zM1641.1 591.3h7.8v7.4h-7.8zM1644.8 590h7.8v7.4h-7.8zM1646.1 596.3h7.8v7.4h-7.8zM1647.3 601.3h7.8v7.4h-7.8zM1646.6 606.3h7.8v7.4h-7.8zM1648.6 592.5h7.8v7.4h-7.8zM1649.8 581.3h7.8v7.4h-7.8zM1651.1 568.8h7.8v7.4h-7.8zM1652.3 557.5h7.8v7.4h-7.8zM1654.8 553.8h7.8v7.4h-7.8zM1657.3 550h7.8v7.4h-7.8zM1653.6 541.3h7.8v7.4h-7.8zM1656.1 536.3h7.8v7.4h-7.8zM1658.6 543.8h7.8v7.4h-7.8zM1661.1 535h7.8v7.4h-7.8zM1663.6 515h7.8v7.4h-7.8zM1664.8 510.1h7.8v7.4h-7.8zM1667.3 513.8h7.8v7.4h-7.8zM1668.1 541.3h7.8v7.4h-7.8zM1642.3 606.3h7.8v7.4h-7.8zM1668.6 576.3h7.8v7.4h-7.8zM1669.8 618.8h7.8v7.4h-7.8zM1671.1 662.5h7.8v7.4h-7.8zM1672.3 701.3h7.8v7.4h-7.8zM1673.6 728.8h7.8v7.4h-7.8zM1681.1 728.8h7.8v7.4h-7.8zM1682.3 703.8h7.8v7.4h-7.8zM1683.6 678.8h7.8v7.4h-7.8zM1684.8 656.3h7.8v7.4h-7.8zM1684.3 652.5h7.8v7.4h-7.8zM1686.1 633.8h7.8v7.4h-7.8zM1687.3 616.3h7.8v7.4h-7.8zM1688.6 600h7.8v7.4h-7.8zM1691.1 582.5h7.8v7.4h-7.8zM1692.3 576.3h7.8v7.4h-7.8zM1692.3 570h7.8v7.4h-7.8zM1693.6 593.8h7.8v7.4h-7.8zM1694.8 601.3h7.8v7.4h-7.8zM1609.8 753.8h7.8v7.4h-7.8zM1615.3 763.8h7.8v7.4h-7.8zM1614.1 767.5h7.8v7.4h-7.8zM1611.1 786.3h7.8v7.4h-7.8zM1613.6 795h7.8v7.4h-7.8zM1612.3 807.5h7.8v7.4h-7.8zM1612.3 811.3h7.8v7.4h-7.8zM1674.8 747.5h7.8v7.4h-7.8zM1679.8 751.3h7.8v7.4h-7.8zM1676.1 767.5h7.8v7.4h-7.8zM1678.1 772.5h7.8v7.4h-7.8zM1677.3 778.3h7.8v7.4h-7.8zM1706.6 529h7.8v7.4h-7.8zM1707.8 521.5h7.8v7.4h-7.8zM1735.8 522.3h7.8v7.4h-7.8zM1737.1 507.3h7.8v7.4h-7.8zM1738.3 493.6h7.8v7.4h-7.8zM1739.6 482.8h7.8v7.4h-7.8zM1740.8 470.3h7.8v7.4h-7.8zM1742.1 458.3h7.8v7.4h-7.8zM1743.3 448.6h7.8v7.4h-7.8zM1744.6 438.3h7.8v7.4h-7.8zM1745.8 428.3h7.8v7.4h-7.8zM1747.1 416.6h7.8v7.4h-7.8zM1748.3 409.1h7.8v7.4h-7.8zM1749.6 401.6h7.8v7.4h-7.8zM1754.1 406.6h7.8v7.4h-7.8zM1751.6 390.3h7.8v7.4h-7.8zM1751.6 387.8h7.8v7.4h-7.8zM1754.8 439.8h7.8v7.4h-7.8zM1755.8 479.8h7.8v7.4h-7.8zM1757.1 527.8h7.8v7.4h-7.8zM1834.6 523.5h7.8v7.4h-7.8zM1835.8 510.3h7.8v7.4h-7.8zM1837.1 497.8h7.8v7.4h-7.8zM1838.3 486.1h7.8v7.4h-7.8zM1839.6 475.3h7.8v7.4h-7.8zM1840.8 463.3h7.8v7.4h-7.8zM1842.1 454.8h7.8v7.4h-7.8zM1843.3 445.3h7.8v7.4h-7.8zM1844.6 437.8h7.8v7.4h-7.8zM1845.8 430.3h7.8v7.4h-7.8zM1846.1 426.6h7.8v7.4h-7.8zM1692.8 596.3h7.8v7.4h-7.8zM1695.3 592.5h7.8v7.4h-7.8zM1696.6 603.8h7.8v7.4h-7.8zM1697.8 607.5h7.8v7.4h-7.8zM1699.1 598.8h7.8v7.4h-7.8zM1692.8 580h7.8v7.4h-7.8zM1700.3 586.3h7.8v7.4h-7.8zM1701.6 575h7.8v7.4h-7.8zM1709.1 578.8h7.8v7.4h-7.8zM1703.6 562.5h7.8v7.4h-7.8zM1704.8 550h7.8v7.4h-7.8zM1706.1 538.8h7.8v7.4h-7.8zM1710.8 627.5h7.8v7.4h-7.8zM1712.1 691.3h7.8v7.4h-7.8zM1723.3 731.3h7.8v7.4h-7.8zM1724.6 701.3h7.8v7.4h-7.8zM1725.8 668.8h7.8v7.4h-7.8zM1727.1 645.5h7.8v7.4h-7.8zM1728.3 622.5h7.8v7.4h-7.8zM1729.6 606.3h7.8v7.4h-7.8zM1730.8 587.5h7.8v7.4h-7.8zM1732.1 568.8h7.8v7.4h-7.8zM1732.8 556.3h7.8v7.4h-7.8zM1733.6 551.3h7.8v7.4h-7.8zM1734.6 536.3h7.8v7.4h-7.8zM1738.3 496.3h7.8v7.4h-7.8zM1758.3 577.5h7.8v7.4h-7.8zM1759.6 631.3h7.8v7.4h-7.8zM1760.8 678.8h7.8v7.4h-7.8zM1762.1 722.5h7.8v7.4h-7.8zM1780.8 725h7.8v7.4h-7.8zM1782.1 695h7.8v7.4h-7.8zM1783.3 662.5h7.8v7.4h-7.8zM1790.8 667.5h7.8v7.4h-7.8zM1784.6 640h7.8v7.4h-7.8zM1785.8 621.3h7.8v7.4h-7.8zM1789.6 628.8h7.8v7.4h-7.8zM1787.1 605h7.8v7.4h-7.8zM1788.3 592.5h7.8v7.4h-7.8zM1792.1 711.3h7.8v7.4h-7.8zM1807.1 738.3h7.8v7.4h-7.8zM1810.8 710h7.8v7.4h-7.8zM1808.3 705h7.8v7.4h-7.8zM1809.6 683.8h7.8v7.4h-7.8zM1820.8 728.8h7.8v7.4h-7.8zM1822.1 701.3h7.8v7.4h-7.8zM1823.3 680h7.8v7.4h-7.8zM1824.6 655h7.8v7.4h-7.8zM1825.8 635h7.8v7.4h-7.8zM1827.1 616.3h7.8v7.4h-7.8zM1828.3 601.3h7.8v7.4h-7.8zM1829.6 581.3h7.8v7.4h-7.8zM1830.8 562.5h7.8v7.4h-7.8zM1831.6 550h7.8v7.4h-7.8zM1832.3 546.3h7.8v7.4h-7.8zM1833.3 536.3h7.8v7.4h-7.8zM1812.8 740.8h7.8v7.4h-7.8zM1713.6 745h7.8v7.4h-7.8zM1722.3 762.5h7.8v7.4h-7.8zM1714.1 792.5h7.8v7.4h-7.8zM1721.6 792.5h7.8v7.4h-7.8zM1720.3 797.5h7.8v7.4h-7.8zM1719.1 831.8h7.8v7.4h-7.8zM1715.3 833.8h7.8v7.4h-7.8zM1718.3 857.5h7.8v7.4h-7.8zM1717.1 863.3h7.8v7.4h-7.8zM1763.3 758.8h7.8v7.4h-7.8zM1772.8 762.5h7.8v7.4h-7.8zM1779.1 758.8h7.8v7.4h-7.8zM1793.3 756.3h7.8v7.4h-7.8zM1774.6 778.8h7.8v7.4h-7.8zM1764.6 788.8h7.8v7.4h-7.8zM1772.8 793.8h7.8v7.4h-7.8zM1778.6 790h7.8v7.4h-7.8zM1770.8 796.3h7.8v7.4h-7.8zM1765.3 802.5h7.8v7.4h-7.8zM1777.1 801.3h7.8v7.4h-7.8zM1777.8 805h7.8v7.4h-7.8zM1794.6 801.3h7.8v7.4h-7.8zM1767.1 816.3h7.8v7.4h-7.8zM1768.3 836.3h7.8v7.4h-7.8zM1770.3 842.5h7.8v7.4h-7.8zM1769.1 848.8h7.8v7.4h-7.8zM1769.8 852.5h7.8v7.4h-7.8zM1812.1 743.8h7.8v7.4h-7.8zM1819.6 758.8h7.8v7.4h-7.8zM1805.3 768.8h7.8v7.4h-7.8zM1814.1 768.8h7.8v7.4h-7.8zM1818.3 783.8h7.8v7.4h-7.8zM1804.6 788.8h7.8v7.4h-7.8zM1814.6 788.8h7.8v7.4h-7.8zM1816.6 801.3h7.8v7.4h-7.8zM1815.8 805h7.8v7.4h-7.8zM1803.3 812.5h7.8v7.4h-7.8zM1795.8 836.3h7.8v7.4h-7.8zM1802.1 842.5h7.8v7.4h-7.8zM1797.1 860h7.8v7.4h-7.8zM1800.8 867.5h7.8v7.4h-7.8zM1799.1 880.8h7.8v7.4h-7.8z" fill="#16E116"/>
<text x="1273" y="387.0" text-anchor="end" class="mono" font-size="13" fill="#808080">200</text>
<text x="1273" y="565.0" text-anchor="end" class="mono" font-size="13" fill="#808080">150</text>
<text x="1273" y="743.0" text-anchor="end" class="mono" font-size="13" fill="#808080">100</text>
<text x="1363" y="941" text-anchor="middle" class="mono" font-size="13" fill="#808080">4000</text>
<text x="1444.5" y="941" text-anchor="middle" class="mono" font-size="13" fill="#808080">5000</text>
<text x="1526" y="941" text-anchor="middle" class="mono" font-size="13" fill="#808080">6000</text>
<text x="1607.5" y="941" text-anchor="middle" class="mono" font-size="13" fill="#808080">7000</text>
<text x="1689" y="941" text-anchor="middle" class="mono" font-size="13" fill="#808080">8000</text>
<text x="1770.5" y="941" text-anchor="middle" class="mono" font-size="13" fill="#808080">9000</text>
<text x="1852" y="941" text-anchor="middle" class="mono" font-size="13" fill="#808080">10000</text>
<text x="1582" y="959" text-anchor="middle" class="mono" font-size="13" fill="#808080">Distance (m)</text>
<text transform="translate(1244,604) rotate(-90)" text-anchor="middle" class="mono" font-size="13" fill="#808080">Y Axis Channels</text>
<rect x="11" y="11" width="20" height="20" fill="#fff"/>
<path d="M15.2 29.6V17.2l5.7 -4.6l5.7 4.6v12.4z" fill="none" stroke="#4A4A4A" stroke-width="1.5" stroke-linejoin="round"/>
<text x="11.6" y="27.6" font-family="Liberation Sans,sans-serif" font-style="italic" font-weight="700" font-size="16.5" fill="#0A1EFF" letter-spacing="-3">HH</text>
<path d="M12 22.3h17.5" stroke="#0A1EFF" stroke-width="1.6"/>
<path d="M55.2 17.6h9.8" stroke="#fff" stroke-width="1.2"/><path d="M55.3 20.4h9.6l-4.8 4.8z" fill="#fff"/>
<path d="M1767 21.5h12" stroke="#fff" stroke-width="1.3"/>
<rect x="1826" y="16" width="11" height="11" fill="none" stroke="#fff" stroke-width="1.3"/>
<path d="M1884 16l11.5 11.5M1895.5 16l-11.5 11.5" stroke="#fff" stroke-width="1.4"/>
<path d="M1896.7 189.7l4.3 -4.5l4.3 4.5" stroke="#444" stroke-width="1.7" fill="none"/>
<path d="M1901.3 217.3h9.5l-4.75 5z" fill="#7A7A7A"/>
<circle cx="25.8" cy="106.2" r="12.3" fill="#3F6FA7"/>
<circle cx="25.8" cy="101.5" r="4" fill="#F0F0F0"/>
<path d="M17.8 113.2c0 -3.6 5.3 -5.2 8 -5.2s8 1.6 8 5.2a10.2 10.2 0 0 1 -16 0z" fill="#F0F0F0"/>
<path d="M160 104.3h10l-5 5z" fill="#333"/>
<path d="M138 213.5l10 10.5M148 213.5l-10 10.5" stroke="#333" stroke-width="1.5"/>
<path transform="translate(230.2 236.8) scale(1.21)" d="M19.14,12.94c0.04-0.3,0.06-0.61,0.06-0.94c0-0.32-0.02-0.64-0.07-0.94l2.03-1.58c0.18-0.14,0.23-0.41,0.12-0.61l-1.92-3.32c-0.12-0.22-0.37-0.29-0.59-0.22l-2.39,0.96c-0.5-0.38-1.03-0.7-1.62-0.94L14.4,2.81c-0.04-0.24-0.24-0.41-0.48-0.41h-3.84c-0.24,0-0.43,0.17-0.47,0.41L9.25,5.35C8.66,5.59,8.12,5.92,7.63,6.29L5.24,5.33c-0.22-0.08-0.47,0-0.59,0.22L2.74,8.87C2.62,9.08,2.66,9.34,2.86,9.48l2.03,1.58C4.84,11.36,4.8,11.69,4.8,12s0.02,0.64,0.07,0.94l-2.03,1.58c-0.18,0.14-0.23,0.41-0.12,0.61l1.92,3.32c0.12,0.22,0.37,0.29,0.59,0.22l2.39-0.96c0.5,0.38,1.03,0.7,1.62,0.94l0.36,2.54c0.05,0.24,0.24,0.41,0.48,0.41h3.84c0.24,0,0.44-0.17,0.47-0.41l0.36-2.54c0.59-0.24,1.13-0.56,1.62-0.94l2.39,0.96c0.22,0.08,0.47,0,0.59-0.22l1.92-3.32c0.12-0.22,0.07-0.47-0.12-0.61L19.14,12.94zM12,15.6c-1.98,0-3.6-1.62-3.6-3.6s1.62-3.6,3.6-3.6s3.6,1.62,3.6,3.6S13.98,15.6,12,15.6z" fill="#3F6FA7" fill-rule="evenodd"/>
<path d="M267.5 238V266" stroke="#D2D2D2" stroke-width="1"/>
<path d="M381.5 238V266" stroke="#D2D2D2" stroke-width="1"/>
<path d="M427.5 238V266" stroke="#D2D2D2" stroke-width="1"/>
<circle cx="291.2" cy="251.5" r="9.5" fill="none" stroke="#5E9A85" stroke-width="1.8"/>
<path d="M286 251.5h10.4M291.2 246.3v10.4" stroke="#5E9A85" stroke-width="1.8"/>
<circle cx="325" cy="251.5" r="9.5" fill="none" stroke="#5E9A85" stroke-width="1.8"/>
<path d="M320.7 247.2l8.6 8.6M329.3 247.2l-8.6 8.6" stroke="#D01414" stroke-width="2.2"/>
<circle cx="357.2" cy="249.6" r="8" fill="none" stroke="#5E9A85" stroke-width="1.5"/>
<circle cx="360.5" cy="253" r="8" fill="#F8F8F8" stroke="#5E9A85" stroke-width="1.5"/>
<path d="M357 249.5l7 7M364 249.5l-7 7" stroke="#D01414" stroke-width="2"/>
<circle cx="405" cy="252.6" r="10.3" fill="#3F6FA7"/>
<path d="M403.3 240.5h3.4v3h-3.4z" fill="#3F6FA7"/>
<path d="M395 244.5l2 -1.5M415 244.5l-2 -1.5" stroke="#555" stroke-width="1.2"/>
<path d="M404.3 245.5h1.4l0.6 7.5l-1.3 3l-1.3 -3z" fill="#F8F8F8"/>
<rect x="439.4" y="242.5" width="18.6" height="18.4" fill="#F8F8F8" stroke="#808080" stroke-width="1.3"/>
<rect x="467.8" y="242.5" width="18.6" height="18.4" fill="#F8F8F8" stroke="#808080" stroke-width="1.3"/>
<path d="M443 252h12" stroke="#6A6A6A" stroke-width="2.4"/>
<path d="M471.5 252h12M477.5 246v12" stroke="#555" stroke-width="2.4"/>
<path transform="translate(708.4 246.7) scale(0.96)" d="M19.14,12.94c0.04-0.3,0.06-0.61,0.06-0.94c0-0.32-0.02-0.64-0.07-0.94l2.03-1.58c0.18-0.14,0.23-0.41,0.12-0.61l-1.92-3.32c-0.12-0.22-0.37-0.29-0.59-0.22l-2.39,0.96c-0.5-0.38-1.03-0.7-1.62-0.94L14.4,2.81c-0.04-0.24-0.24-0.41-0.48-0.41h-3.84c-0.24,0-0.43,0.17-0.47,0.41L9.25,5.35C8.66,5.59,8.12,5.92,7.63,6.29L5.24,5.33c-0.22-0.08-0.47,0-0.59,0.22L2.74,8.87C2.62,9.08,2.66,9.34,2.86,9.48l2.03,1.58C4.84,11.36,4.8,11.69,4.8,12s0.02,0.64,0.07,0.94l-2.03,1.58c-0.18,0.14-0.23,0.41-0.12,0.61l1.92,3.32c0.12,0.22,0.37,0.29,0.59,0.22l2.39-0.96c0.5,0.38,1.03,0.7,1.62,0.94l0.36,2.54c0.05,0.24,0.24,0.41,0.48,0.41h3.84c0.24,0,0.44-0.17,0.47-0.41l0.36-2.54c0.59-0.24,1.13-0.56,1.62-0.94l2.39,0.96c0.22,0.08,0.47,0,0.59-0.22l1.92-3.32c0.12-0.22,0.07-0.47-0.12-0.61L19.14,12.94zM12,15.6c-1.98,0-3.6-1.62-3.6-3.6s1.62-3.6,3.6-3.6s3.6,1.62,3.6,3.6S13.98,15.6,12,15.6z" fill="#3F6FA7" fill-rule="evenodd"/>
<path d="M764.7 251.8L755 265.5H767.8Z" stroke="#2F6BA8" stroke-width="1.6" fill="none"/>
<circle cx="789.9" cy="259.3" r="7.5" fill="none" stroke="#2F5F97" stroke-width="1.5"/>
<path d="M787 250h5.8" stroke="#2F5F97" stroke-width="1.5"/><path d="M795.3 254l1.6 -1.6" stroke="#2F5F97" stroke-width="1.3"/>
<path d="M789.9 255.2v4.3" stroke="#444" stroke-width="1.8"/>
<path d="M811 252.4a2 2 0 0 1 2 -2h11.2a2 2 0 0 1 2 2v10.3a2 2 0 0 1 -2 2h-3.4l-2.2 2.2l-2.2 -2.2h-3.4a2 2 0 0 1 -2 -2z" fill="#2F5F97"/>
<path d="M813.5 254.3c5 0 5 6.6 10 6.6M813.5 260.9c5 0 5 -6.6 10 -6.6" stroke="#F0F0F0" stroke-width="1.3" fill="none"/>
<circle cx="813.6" cy="260.9" r="1.1" fill="#F0F0F0"/><circle cx="823.6" cy="254.3" r="1.1" fill="#F0F0F0"/>
<path d="M851.5 262.6h7.3M861 262.6h7.3" stroke="#4A4A4A" stroke-width="1.7"/>
<path d="M851 262.6l4.2 -3.6v7.2z M868.8 262.6l-4.2 -3.6v7.2z" fill="#4A4A4A"/>
<path d="M987.5 262.3h14.5" stroke="#6A6A6A" stroke-width="1.5"/><path d="M986.3 262.3l4 -3.3v6.6z M1003.2 262.3l-4 -3.3v6.6z" fill="#6A6A6A"/>
<path d="M989.6 259.7h3v-4.6a2.6 3.8 0 0 1 5.2 0v4.6h3" stroke="#6A6A6A" stroke-width="1.4" fill="none"/>
<path d="M1033.5 250.8h6.5l4 4v8.5h-4.5" stroke="#7A7A7A" stroke-width="1.5" fill="none"/><path d="M1040 251l0 3.5h3.5" stroke="#7A7A7A" stroke-width="1.2" fill="none"/><path d="M1029.8 254h6l3.5 3.5v8.5h-9.5z" stroke="#7A7A7A" stroke-width="1.5" fill="#F8F8F8"/>
<path d="M1057.3 253.2a2 2 0 0 1 2 -2h9.5l4 4v8.5a2 2 0 0 1 -2 2h-11.5a2 2 0 0 1 -2 -2z" fill="#3F6FA7"/><rect x="1059.3" y="253.2" width="8.5" height="3" fill="#F8F8F8"/><circle cx="1065" cy="261.2" r="2.2" fill="#F8F8F8"/>
<path d="M1088.3 255.3V263H1097.3" stroke="#6A6A6A" stroke-width="1.5" fill="none"/><path d="M1085.3 256.3l3 -4l3 4z M1096.6 260l4 3l-4 3z" fill="#6A6A6A"/>
<path d="M1127.2 256.5V251.1H1132.6 M1137.3 251.1H1142.7V256.5 M1142.7 259.9V265.3H1137.3 M1132.6 265.3H1127.2V259.9" stroke="#6A6A6A" stroke-width="2.3" fill="none"/>
<path d="M1176.4 251.8L1168.8 264.6a0.7 0.7 0 0 0 0.6 1h14a0.7 0.7 0 0 0 0.6 -1z" fill="#FF6A0F"/>
<path d="M1176.4 256.5v4.2M1176.4 262v1.5" stroke="#fff" stroke-width="1.3"/>
<path transform="translate(1343.25 246.35) scale(0.94)" d="M19.14,12.94c0.04-0.3,0.06-0.61,0.06-0.94c0-0.32-0.02-0.64-0.07-0.94l2.03-1.58c0.18-0.14,0.23-0.41,0.12-0.61l-1.92-3.32c-0.12-0.22-0.37-0.29-0.59-0.22l-2.39,0.96c-0.5-0.38-1.03-0.7-1.62-0.94L14.4,2.81c-0.04-0.24-0.24-0.41-0.48-0.41h-3.84c-0.24,0-0.43,0.17-0.47,0.41L9.25,5.35C8.66,5.59,8.12,5.92,7.63,6.29L5.24,5.33c-0.22-0.08-0.47,0-0.59,0.22L2.74,8.87C2.62,9.08,2.66,9.34,2.86,9.48l2.03,1.58C4.84,11.36,4.8,11.69,4.8,12s0.02,0.64,0.07,0.94l-2.03,1.58c-0.18,0.14-0.23,0.41-0.12,0.61l1.92,3.32c0.12,0.22,0.37,0.29,0.59,0.22l2.39-0.96c0.5,0.38,1.03,0.7,1.62,0.94l0.36,2.54c0.05,0.24,0.24,0.41,0.48,0.41h3.84c0.24,0,0.44-0.17,0.47-0.41l0.36-2.54c0.59-0.24,1.13-0.56,1.62-0.94l2.39,0.96c0.22,0.08,0.47,0,0.59-0.22l1.92-3.32c0.12-0.22,0.07-0.47-0.12-0.61L19.14,12.94zM12,15.6c-1.98,0-3.6-1.62-3.6-3.6s1.62-3.6,3.6-3.6s3.6,1.62,3.6,3.6S13.98,15.6,12,15.6z" fill="#3F6FA7" fill-rule="evenodd"/>
<path d="M1387.6 250.4L1395.4 255L1404.2 249.5" stroke="#C8432B" stroke-width="1.3" fill="none"/>
<path d="M1387.6 257.5L1395.4 259.6L1404.2 257.3" stroke="#D9A35B" stroke-width="1.3" fill="none"/>
<path d="M1387.6 265L1395.4 265L1404.2 265.8" stroke="#4A7DB5" stroke-width="1.3" fill="none"/>
<circle cx="1387.6" cy="250.4" r="1.4" fill="#F8F8F8" stroke="#C8432B" stroke-width="1"/>
<circle cx="1395.4" cy="255" r="1.4" fill="#F8F8F8" stroke="#C8432B" stroke-width="1"/>
<circle cx="1404.2" cy="249.5" r="1.4" fill="#F8F8F8" stroke="#C8432B" stroke-width="1"/>
<circle cx="1387.6" cy="257.5" r="1.4" fill="#F8F8F8" stroke="#D9A35B" stroke-width="1"/>
<circle cx="1395.4" cy="259.6" r="1.4" fill="#F8F8F8" stroke="#D9A35B" stroke-width="1"/>
<circle cx="1404.2" cy="257.3" r="1.4" fill="#F8F8F8" stroke="#D9A35B" stroke-width="1"/>
<circle cx="1387.6" cy="265" r="1.4" fill="#F8F8F8" stroke="#4A7DB5" stroke-width="1"/>
<circle cx="1395.4" cy="265" r="1.4" fill="#F8F8F8" stroke="#4A7DB5" stroke-width="1"/>
<circle cx="1404.2" cy="265.8" r="1.4" fill="#F8F8F8" stroke="#4A7DB5" stroke-width="1"/>
<path d="M1433.8 250.1h6.5l4 4v8.5h-4.5" stroke="#7A7A7A" stroke-width="1.5" fill="none"/><path d="M1440.3 250.3l0 3.5h3.5" stroke="#7A7A7A" stroke-width="1.2" fill="none"/><path d="M1430.1 253.3h6l3.5 3.5v8.5h-9.5z" stroke="#7A7A7A" stroke-width="1.5" fill="#F8F8F8"/>
<path d="M1458.1 252.2a2 2 0 0 1 2 -2h9.5l4 4v8.5a2 2 0 0 1 -2 2h-11.5a2 2 0 0 1 -2 -2z" fill="#3F6FA7"/><rect x="1460.1" y="252.2" width="8.5" height="3" fill="#F8F8F8"/><circle cx="1465.8" cy="260.2" r="2.2" fill="#F8F8F8"/>
<path d="M1489.1 254.5V263.5H1498.1" stroke="#6A6A6A" stroke-width="1.5" fill="none"/><path d="M1486.1 255.5l3 -4l3 4z M1497.4 260.5l4 3l-4 3z" fill="#6A6A6A"/>
<path d="M1528 255.8V250.4H1533.4 M1538.5 250.4H1543.9V255.8 M1543.9 260.2V265.6H1538.5 M1533.4 265.6H1528V260.2" stroke="#6A6A6A" stroke-width="2.3" fill="none"/>
</svg>
<span class="t" id="title" style="left:427px;top:11.5px;font-size:15px;color:#fff;letter-spacing:-0.031px;">HH Data Management staging.hhinternal.net:8082</span>
<span class="t" id="dispcfg" style="left:1111px;top:11.5px;font-size:15px;color:#fff;letter-spacing:0.071px;">Display Configuration</span>
<span class="t" id="upd" style="left:1489px;top:11.5px;font-size:15px;color:#fff;letter-spacing:-0.051px;">Updates Available</span>
<span class="t" id="acc" style="left:1621px;top:11.5px;font-size:15px;color:#fff;letter-spacing:0.042px;">Accounts</span>
<span class="t" id="help" style="left:1700px;top:11.5px;font-size:15px;color:#fff;letter-spacing:0.380px;">Help</span>
<span class="t" id="m1" style="left:20px;top:53px;font-size:16px;color:#444;letter-spacing:-0.260px;">File</span>
<span class="t" id="m2" style="left:81px;top:53px;font-size:16px;color:#444;letter-spacing:0.660px;">Admin</span>
<span class="t" id="m3" style="left:165px;top:53px;font-size:16px;color:#444;letter-spacing:0.401px;">Management</span>
<span class="t" id="m4" style="left:298px;top:53px;font-size:16px;color:#444;letter-spacing:0.156px;">Championship</span>
<span class="t" id="m5" style="left:439px;top:53px;font-size:16px;color:#444;letter-spacing:-0.230px;">Event</span>
<span class="t" id="m6" style="left:515px;top:53px;font-size:16px;color:#444;letter-spacing:0.609px;">Workbook</span>
<span class="t" id="m7" style="left:628px;top:53px;font-size:16px;color:#444;letter-spacing:0.020px;">Test Account 1 Custom Views</span>
<span class="t" id="m8" style="left:877px;top:53px;font-size:16px;color:#444;letter-spacing:0.020px;">Test Account 3 Custom Views</span>
<span class="t" id="m9" style="left:1138px;top:53px;font-size:16px;color:#1565A9;font-weight:700;letter-spacing:-0.042px;">Data Viewer</span>
<span class="t" id="combo" style="left:53px;top:96px;font-size:15px;color:#444;letter-spacing:-0.120px;">Test Account 1</span>
<span class="t" id="set" style="left:195px;top:89.5px;font-size:15px;color:#444;letter-spacing:-0.270px;">Settings...</span>
<span class="t" id="ref" style="left:195px;top:118.5px;font-size:15px;color:#444;letter-spacing:-0.376px;">Refresh Graphs</span>
<span class="t" id="exp" style="left:311px;top:89.5px;font-size:15px;color:#444;letter-spacing:-0.285px;">Export Fast Lap Comparisons</span>
<span class="t" id="g1" style="left:68px;top:175.5px;font-size:15px;color:#444;letter-spacing:0.049px;">Context</span>
<span class="t" id="g2" style="left:203px;top:175.5px;font-size:15px;color:#444;letter-spacing:-0.018px;">Plot Settings</span>
<span class="t" id="g3" style="left:370px;top:175.5px;font-size:15px;color:#444;letter-spacing:-0.210px;">Screenshot</span>
<span class="t" id="dtab" style="left:20px;top:210px;font-size:15px;color:#222;letter-spacing:-0.144px;">Data Viewer</span>
<span class="t" id="q" style="left:123px;top:210px;font-size:17px;color:#444;">?</span>
<span class="t" id="name" style="left:32px;top:273.5px;font-size:15px;color:#444;letter-spacing:-0.005px;">Name</span>
<span class="t" id="tdp" style="left:527px;top:248px;font-size:20px;color:#1779CB;letter-spacing:-0.123px;">Time/Distance Plot</span>
<span class="t" id="sp" style="left:1226px;top:247px;font-size:20px;color:#1779CB;letter-spacing:-0.126px;">Scatter Plot</span>
<span class="t" id="inp" style="left:890px;top:249px;font-size:15px;color:#555;letter-spacing:-0.536px;">1.041 s</span>
<span class="t" id="r0" style="left:50px;top:301.5px;font-size:15px;color:#444;letter-spacing:-0.092px;">Data Viewer Championship / Data Viewer Event</span>
<span class="t" id="r1" style="left:68px;top:330.5px;font-size:15px;color:#444;letter-spacing:-0.177px;">Session1 / IMSA GTD / 12</span>
<span class="t" id="r2" style="left:87px;top:359.5px;font-size:15px;color:#444;letter-spacing:-0.615px;">RUN1</span>
<span class="t" id="r3" style="left:106px;top:388.5px;font-size:15px;color:#444;letter-spacing:-0.266px;">DataFile</span>
<span class="t" id="r4" style="left:125px;top:417.5px;font-size:15px;color:#444;letter-spacing:-0.218px;">Lap 1 - 1:04.000</span>
<span class="t" id="r5" style="left:125px;top:446.5px;font-size:15px;color:#444;letter-spacing:-0.218px;">Lap 2 - 1:03.000</span>
<span class="t" id="r6" style="left:125px;top:475.5px;font-size:15px;color:#444;letter-spacing:-0.218px;">Lap 3 - 1:01.000</span>
<span class="t" id="r7" style="left:125px;top:504.5px;font-size:15px;color:#444;letter-spacing:-0.218px;">Lap 4 - 1:05.000</span>
<span class="t" id="r8" style="left:68px;top:533.5px;font-size:15px;color:#444;letter-spacing:-0.199px;">Session2 / GT3 / 01</span>
<span class="t" id="r9" style="left:87px;top:562.5px;font-size:15px;color:#444;letter-spacing:-0.281px;">RUN2</span>
<span class="t" id="r10" style="left:106px;top:591.5px;font-size:15px;color:#444;letter-spacing:-0.266px;">DataFile</span>
<span class="t" id="r11" style="left:125px;top:620.5px;font-size:15px;color:#444;letter-spacing:-0.218px;">Lap 1 - 1:04.000</span>
<span class="t" id="r12" style="left:125px;top:649.5px;font-size:15px;color:#444;letter-spacing:-0.218px;">Lap 2 - 1:00.000</span>
<span class="t" id="r13" style="left:125px;top:678.5px;font-size:15px;color:#444;letter-spacing:-0.218px;">Lap 3 - 1:05.000</span>
<span class="t" id="r14" style="left:125px;top:707.5px;font-size:15px;color:#444;letter-spacing:-0.218px;">Lap 4 - 1:06.000</span>
</body></html>
